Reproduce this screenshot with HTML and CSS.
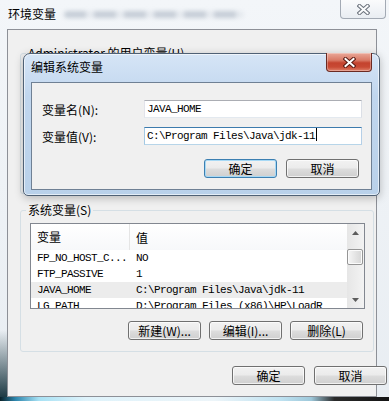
FILE: index.html
```html
<!DOCTYPE html>
<html lang="zh-CN">
<head>
  <meta charset="UTF-8">
  <title>环境变量</title>
  <link rel="stylesheet" href="styles.css">
</head>
<body>
  <div class="window">
    <!-- Заголовок внешнего окна -->
    <div class="titlebar">
      <span class="title">环境变量</span>
      <div class="title-blur"></div>
      <div class="close-btn">
        <svg width="13" height="11" viewBox="0 0 13 11">
          <path d="M2.5 2 L10.5 9 M10.5 2 L2.5 9" stroke="#6a717b" stroke-width="4" stroke-linecap="square"/>
          <path d="M2.5 2 L10.5 9 M10.5 2 L2.5 9" stroke="#fafbfc" stroke-width="2" stroke-linecap="square"/>
        </svg>
      </div>
    </div>

    <div class="client">
      <fieldset class="group user-group">
        <legend>Administrator 的用户变量(U)</legend>
      </fieldset>

      <!-- Системные переменные -->
      <fieldset class="group sys-group">
        <legend>系统变量(S)</legend>
        <div class="listview">
          <div class="lv-body">
            <div class="lv-header">
              <div class="col1">变量</div>
              <div class="col2">值</div>
            </div>
            <div class="lv-row">
              <div class="col1">FP_NO_HOST_C...</div>
              <div class="col2">NO</div>
            </div>
            <div class="lv-row">
              <div class="col1">FTP_PASSIVE</div>
              <div class="col2">1</div>
            </div>
            <div class="lv-row selected">
              <div class="col1">JAVA_HOME</div>
              <div class="col2">C:\Program Files\Java\jdk-11</div>
            </div>
            <div class="lv-row">
              <div class="col1">LG_PATH</div>
              <div class="col2">D:\Program Files (x86)\HP\LoadR</div>
            </div>
          </div>
          <div class="scrollbar">
            <div class="sb-arrow">
              <svg width="7" height="4" viewBox="0 0 7 4"><path d="M0 4 L3.5 0 L7 4Z" fill="#5c5c5c"/></svg>
            </div>
            <div class="sb-thumb"></div>
            <div class="sb-space"></div>
            <div class="sb-arrow">
              <svg width="7" height="4" viewBox="0 0 7 4"><path d="M0 0 L3.5 4 L7 0Z" fill="#5c5c5c"/></svg>
            </div>
          </div>
        </div>
        <div class="btn-row sys-btns">
          <button class="btn">新建(W)...</button>
          <button class="btn">编辑(I)...</button>
          <button class="btn">删除(L)</button>
        </div>
      </fieldset>

      <div class="btn-row main-btns">
        <button class="btn">确定</button>
        <button class="btn">取消</button>
      </div>
    </div>

    <div class="glass-edge"></div>

    <!-- Диалог редактирования поверх окна -->
    <div class="dialog">
      <div class="dlg-titlebar">
        <span class="dlg-title">编辑系统变量</span>
        <div class="close-btn red">
          <svg width="13" height="11" viewBox="0 0 13 11">
            <path d="M2.5 2 L10.5 9 M10.5 2 L2.5 9" stroke="#5a1a12" stroke-width="4" stroke-linecap="square"/>
            <path d="M2.5 2 L10.5 9 M10.5 2 L2.5 9" stroke="#ffffff" stroke-width="2" stroke-linecap="square"/>
          </svg>
        </div>
      </div>
      <div class="dlg-client">
        <div class="form">
          <label>变量名(N):</label>
          <div class="field">JAVA_HOME</div>
          <label>变量值(V):</label>
          <div class="field focused">C:\Program Files\Java\jdk-11<span class="caret"></span></div>
        </div>
        <div class="btn-row dlg-btns">
          <button class="btn default">确定</button>
          <button class="btn">取消</button>
        </div>
      </div>
    </div>
  </div>
</body>
</html>
```

FILE: styles.css
```css
/* Общие стили */
* {
  box-sizing: border-box;
}

body {
  margin: 0;
  font-family: "Noto Sans CJK SC", "Liberation Sans", sans-serif;
  font-size: 12px;
  color: #000;
  background: #fff;
}

/* Внешнее окно */
.window {
  position: relative;
  width: 389px;
  height: 401px;
  overflow: hidden;
  display: flex;
  flex-direction: column;
  background:
    linear-gradient(to bottom, rgba(20, 48, 56, 0) 330px, #12303a 401px) left top / 7px 100% no-repeat,
    linear-gradient(#f3f6f9, #e8edf2);
}

.titlebar {
  height: 29px;
  flex: none;
  display: flex;
  align-items: flex-start;
  padding-left: 8px;
}

.title {
  margin-top: 6px;
  line-height: 16px;
}

.title-blur {
  width: 180px;
  height: 7px;
  margin: 11px 0 0 8px;
  border-radius: 4px;
  background: repeating-linear-gradient(to right, #9aa6b6 0 22px, rgba(154, 166, 182, 0.3) 22px 30px);
  filter: blur(2px);
  opacity: 0.5;
}

.close-btn {
  width: 46px;
  height: 19px;
  margin-left: auto;
  margin-right: 3px;
  border: 1px solid #a3aab4;
  border-top: none;
  border-radius: 0 0 4px 4px;
  display: flex;
  align-items: center;
  justify-content: center;
  background: linear-gradient(#fafbfc, #e9edf2);
}

/* Клиентская область */
.client {
  width: 370px;
  height: 368px;
  flex: none;
  margin-left: 7px;
  border: 1px solid #8d9097;
  background: #f0f0f0;
  padding: 17px 1px 0 12px;
  display: flex;
  flex-direction: column;
}

.group {
  margin: 0;
  width: 354px;
  min-width: 0;
  border: 1px solid #d5dfe5;
  border-radius: 3px;
  padding: 7px 8px 11px 9px;
}

.group legend {
  padding: 0 2px;
  margin-left: -4px;
  line-height: 12px;
  font-size: 12px;
}

.user-group {
  height: 147px;
  margin-bottom: 10px;
}

.sys-group {
  height: 148px;
}

/* Список переменных */
.listview {
  width: 335px;
  height: 86px;
  border: 1px solid #828790;
  background: #fff;
  display: flex;
}

.lv-body {
  flex: 1;
  overflow: hidden;
}

.lv-header {
  height: 26px;
  display: flex;
  align-items: center;
  background: linear-gradient(#ffffff, #f7f8fa);
}

.lv-header .col1 {
  border-right: 1px solid #e5e5e5;
  height: 26px;
  line-height: 26px;
}

.col1 {
  width: 99px;
  flex: none;
  padding-left: 6px;
  white-space: nowrap;
}

.col2 {
  padding-left: 6px;
  white-space: nowrap;
}

.lv-row {
  height: 16px;
  display: flex;
  align-items: center;
  font-family: "Liberation Mono", monospace;
  font-size: 11px;
  letter-spacing: -0.6px;
  line-height: 16px;
}

.lv-row.selected {
  background: #ececec;
}

.scrollbar {
  width: 17px;
  flex: none;
  display: flex;
  flex-direction: column;
  background: linear-gradient(to right, #e6e6e6, #f3f3f3);
}

.sb-arrow {
  height: 17px;
  display: flex;
  align-items: center;
  justify-content: center;
}

.sb-thumb {
  height: 16px;
  margin: 8px 1px 0 0;
  border: 1px solid #959595;
  border-radius: 2px;
  background: linear-gradient(to right, #f6f6f6, #e2e2e2 60%, #d6d6d6);
  box-shadow: inset 0 0 0 1px #fbfbfb;
}

.sb-space {
  flex: 1;
}

/* Кнопки */
.btn-row {
  display: flex;
  justify-content: flex-end;
}

.btn {
  width: 73px;
  height: 19px;
  padding: 0;
  border: 1px solid #707070;
  border-radius: 3px;
  background: linear-gradient(#f2f2f2 0%, #ebebeb 48%, #dddddd 52%, #cfcfcf 100%);
  box-shadow: inset 0 0 0 1px rgba(255, 255, 255, 0.7);
  font-family: "Noto Sans CJK SC", "Liberation Sans", sans-serif;
  font-size: 12px;
  line-height: 17px;
  color: #000;
}

.btn.default {
  border-color: #3c7fb1;
  box-shadow: inset 0 0 0 1px #a7d9f5;
}

.sys-btns {
  margin-top: 12px;
  gap: 8px;
  padding-right: 2px;
}

.main-btns {
  margin-top: 14px;
  gap: 9px;
  padding-right: 0;
  width: 367px;
}

/* Нижняя кромка стекла */
.glass-edge {
  flex: 1;
  background: linear-gradient(to right, #0b2229 0, #2d86ad 4%, #a7e1f4 10%, #dff3fb 22%, #edf5f9 55%, #bfe2f1 72%, #9ec8da 80%, #2a2a2a 86%, #141414 100%);
}

/* Диалог редактирования */
.dialog {
  position: absolute;
  left: 23px;
  top: 53px;
  width: 357px;
  height: 143px;
  border: 1px solid #4f6175;
  border-radius: 7px 7px 5px 5px;
  padding: 0 7px;
  display: flex;
  flex-direction: column;
  background: linear-gradient(#d6e5f6, #c0d6ee 30%, #b9d1ea);
  box-shadow: inset 0 0 0 1px rgba(255, 255, 255, 0.6), 0 2px 8px rgba(0, 0, 0, 0.25);
}

.dlg-titlebar {
  height: 28px;
  flex: none;
  display: flex;
  align-items: flex-start;
}

.dlg-title {
  margin-top: 5px;
  line-height: 16px;
}

.close-btn.red {
  margin-top: -1px;
  margin-right: 0;
  height: 19px;
  border: 1px solid #6b2a22;
  border-top: none;
  background: linear-gradient(#eaa899 0%, #d97a66 40%, #c4432e 55%, #c84a34 78%, #e0816a 100%);
  box-shadow: inset 0 0 0 1px rgba(255, 255, 255, 0.3);
}

.dlg-client {
  height: 108px;
  flex: none;
  border: 1px solid #6f8094;
  background: #f0f0f0;
  padding: 17px 12px 0 10px;
}

.form {
  display: grid;
  grid-template-columns: 102px 218px;
  grid-auto-rows: 18px;
  row-gap: 9px;
  align-items: center;
}

.field {
  height: 18px;
  border: 1px solid;
  border-color: #abadb3 #dbdfe6 #e3e9ef #e2e3ea;
  background: #fff;
  padding-left: 2px;
  font-family: "Liberation Mono", monospace;
  font-size: 11px;
  letter-spacing: -0.6px;
  line-height: 16px;
  white-space: nowrap;
}

.field.focused {
  border-color: #3d7bad #b5cfe7 #b7d5e9 #a4c9e3;
}

.caret {
  display: inline-block;
  width: 1px;
  height: 13px;
  margin-left: 1px;
  background: #000;
  vertical-align: -2px;
}

.dlg-btns {
  margin-top: 14px;
  gap: 9px;
}
```
